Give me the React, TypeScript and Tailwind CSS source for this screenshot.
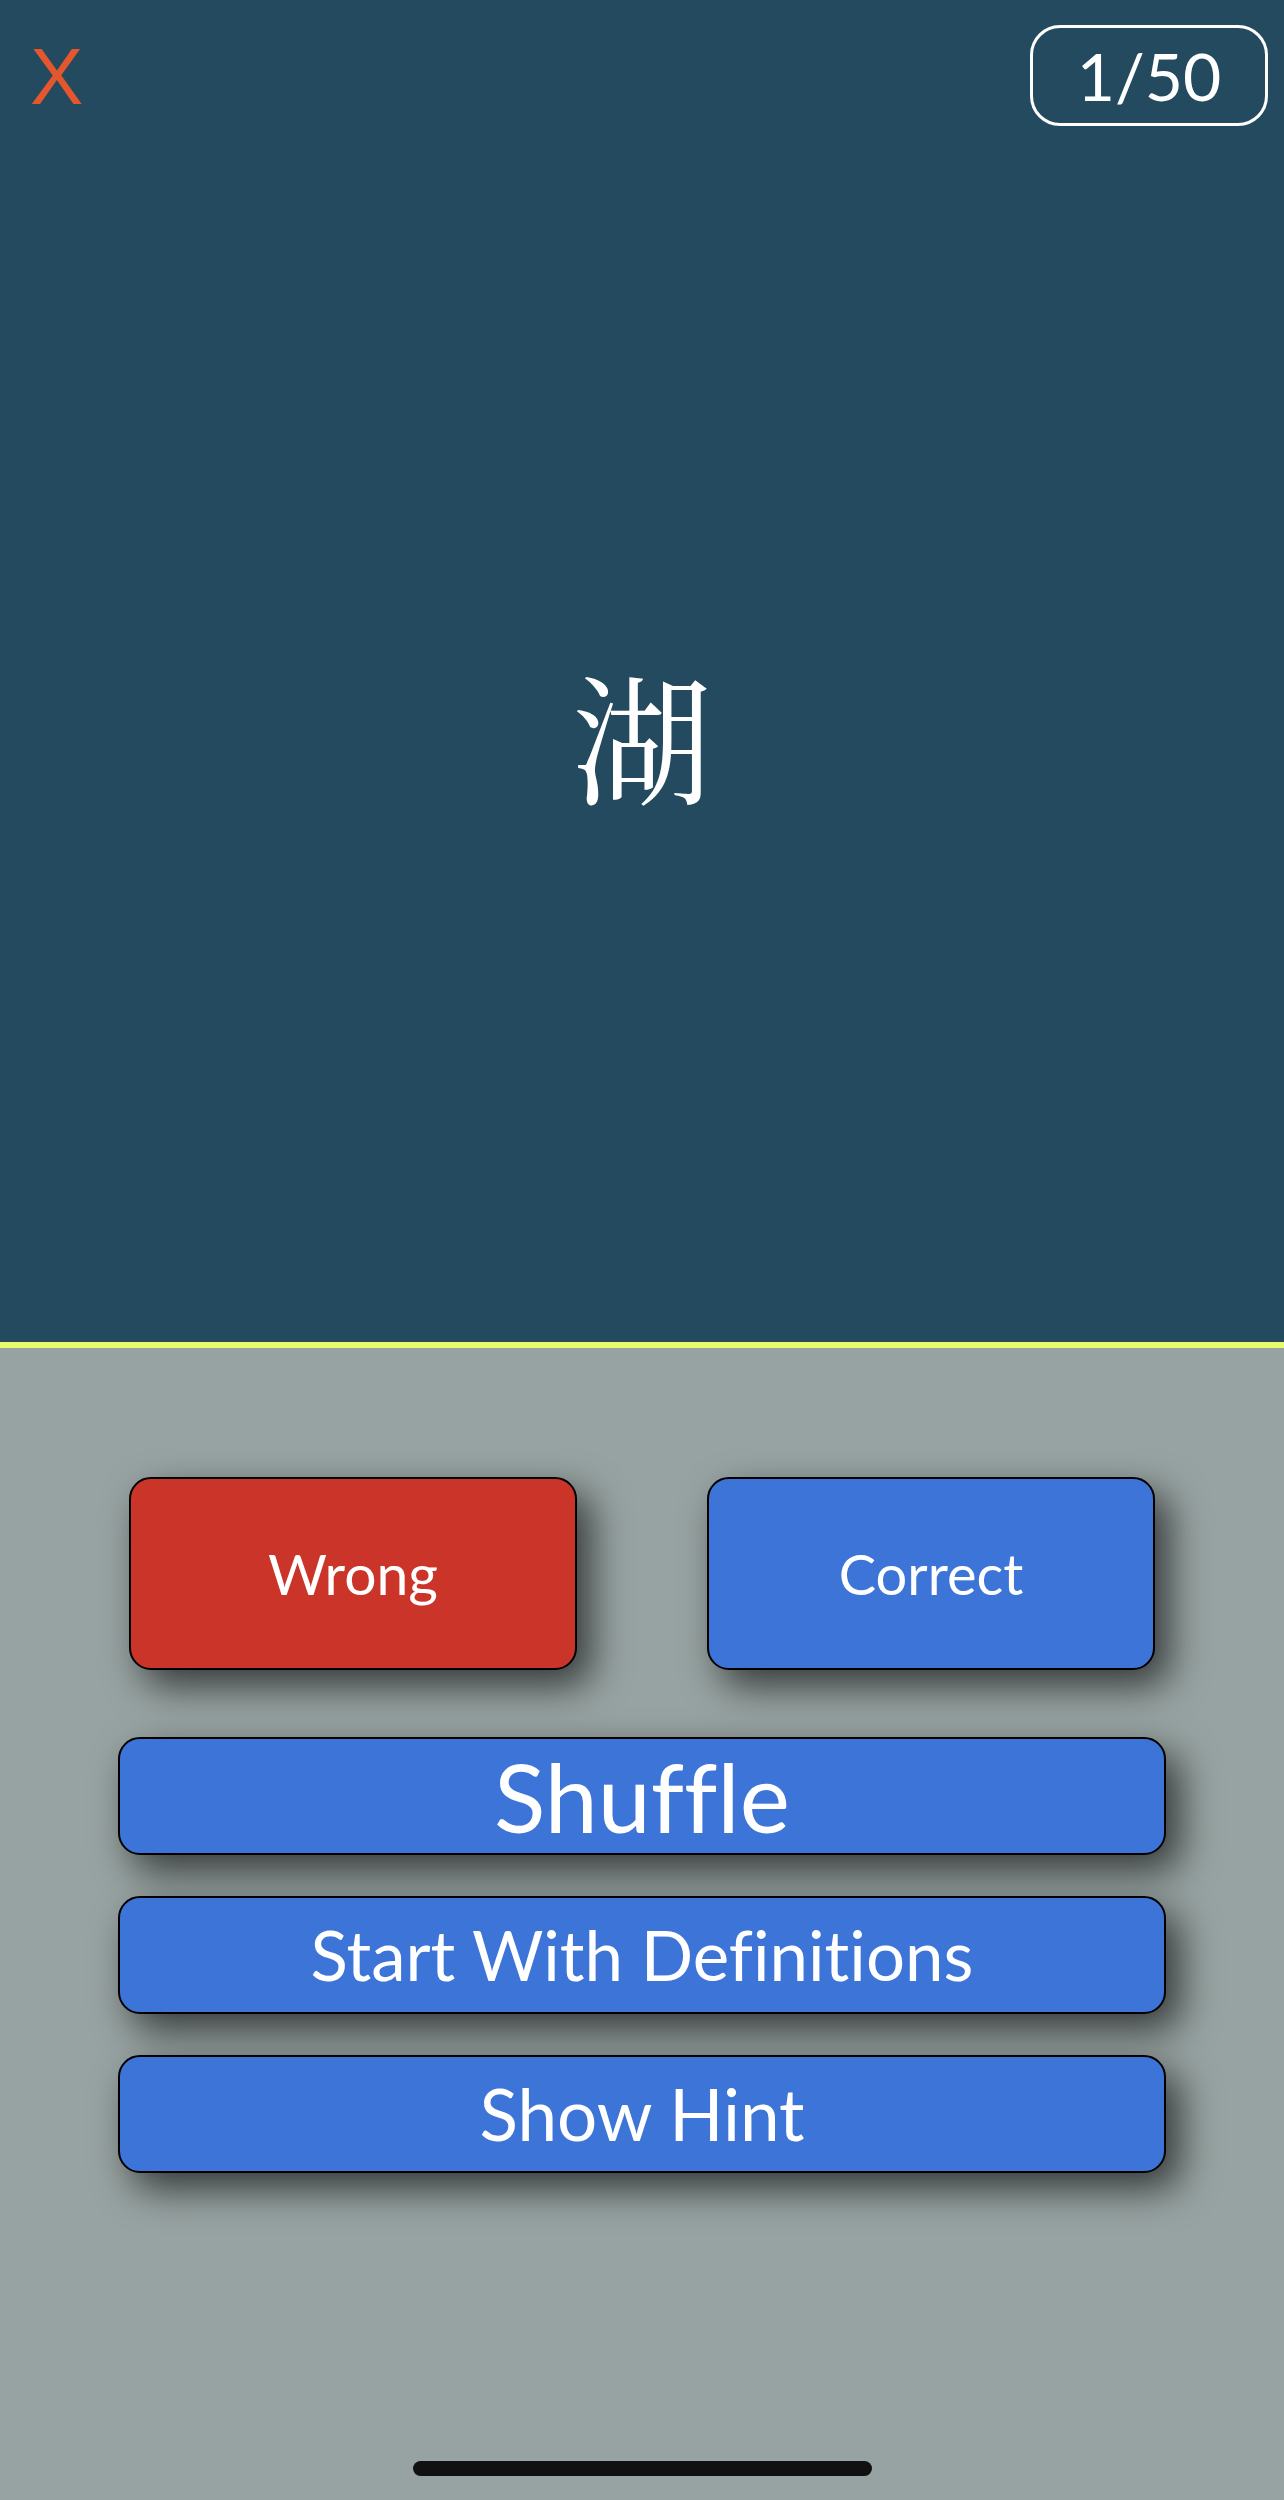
import React from 'react';

const latin = "font-['Lato','Open_Sans',sans-serif]";
const shadow = 'shadow-[14px_16px_38px_rgba(0,0,0,0.65)]';

function BigButton({ label, size }: { label: string; size: string }) {
  return (
    <button
      className={`w-full h-[118px] bg-[#3d74d8] border-2 border-black rounded-[22px] text-white flex items-center justify-center [font-variant-ligatures:none] ${shadow} ${size}`}
    >
      {label}
    </button>
  );
}

export default function App() {
  return (
    <div className={`w-[1284px] h-[2500px] flex flex-col bg-[#97a3a2] ${latin}`}>
      {/* Card */}
      <div className="h-[1342px] bg-[#234a5e] flex flex-col">
        <div className="h-[150px] flex justify-between items-start pt-[25px] pl-[30px] pr-[16px]">
          <button className="text-[#e4572e] text-[80px] leading-none font-['Liberation_Sans',sans-serif] font-light mt-[12px]">
            X
          </button>
          <div className="w-[238px] h-[101px] border-[3px] border-white rounded-[30px] flex items-center justify-center text-white text-[66px] leading-none">
            1/50
          </div>
        </div>
        <div className="flex-1 flex items-center justify-center pb-[24px]">
          <span className="text-white text-[140px] leading-none font-['Noto_Serif_CJK_SC','Noto_Sans_CJK_SC',serif]">
            湖
          </span>
        </div>
      </div>
      <div className="h-[6px] bg-[#e6fa6c]" />

      {/* Controls */}
      <div className="flex-1 flex flex-col relative">
        <div className="flex justify-between px-[129px] pt-[129px]">
          <button className={`w-[448px] h-[193px] bg-[#cb3428] border-2 border-black rounded-[22px] text-white text-[57px] ${shadow}`}>
            Wrong
          </button>
          <button className={`w-[448px] h-[193px] bg-[#3d74d8] border-2 border-black rounded-[22px] text-white text-[56px] ${shadow}`}>
            Correct
          </button>
        </div>
        <div className="flex flex-col gap-[41px] px-[118px] mt-[67px]">
          <BigButton label="Shuffle" size="text-[95px]" />
          <BigButton label="Start With Definitions" size="text-[69px]" />
          <BigButton label="Show Hint" size="text-[71px]" />
        </div>
        <div className="mt-auto mb-[24px] mx-auto w-[459px] h-[15px] rounded-full bg-[#111111]" />
      </div>
    </div>
  );
}
